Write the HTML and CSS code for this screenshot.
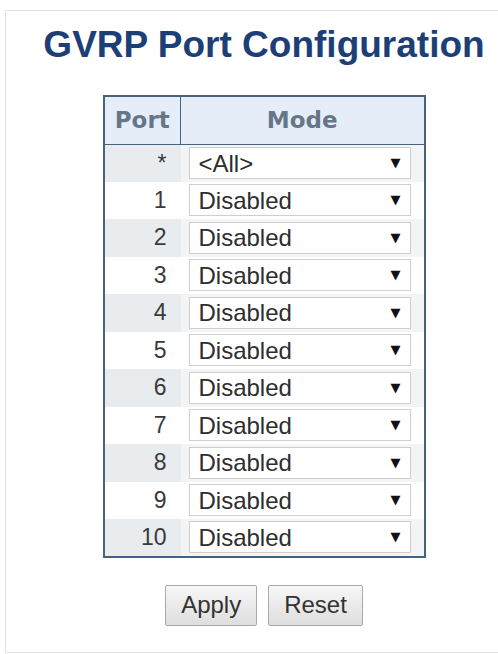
FILE: index.html
```html
<!DOCTYPE html>
<html lang="en">

<head>
    <meta charset="UTF-8">
    <title>GVRP Port Configuration</title>
    <link rel="stylesheet" href="styles.css">
</head>

<body>
    <div class="page">
        <h1>GVRP Port Configuration</h1>
        <table class="config">
            <thead>
                <tr>
                    <th class="col-port">Port</th>
                    <th>Mode</th>
                </tr>
            </thead>
            <tbody>
                <tr class="shade">
                    <td class="port">*</td>
                    <td class="mode"><div class="select"><select><option>&lt;All&gt;</option><option>Disabled</option><option>GVRP enabled</option></select><span class="arrow">&#9660;</span></div></td>
                </tr>
                <tr>
                    <td class="port">1</td>
                    <td class="mode"><div class="select"><select><option>Disabled</option><option>GVRP enabled</option></select><span class="arrow">&#9660;</span></div></td>
                </tr>
                <tr class="shade">
                    <td class="port">2</td>
                    <td class="mode"><div class="select"><select><option>Disabled</option><option>GVRP enabled</option></select><span class="arrow">&#9660;</span></div></td>
                </tr>
                <tr>
                    <td class="port">3</td>
                    <td class="mode"><div class="select"><select><option>Disabled</option><option>GVRP enabled</option></select><span class="arrow">&#9660;</span></div></td>
                </tr>
                <tr class="shade">
                    <td class="port">4</td>
                    <td class="mode"><div class="select"><select><option>Disabled</option><option>GVRP enabled</option></select><span class="arrow">&#9660;</span></div></td>
                </tr>
                <tr>
                    <td class="port">5</td>
                    <td class="mode"><div class="select"><select><option>Disabled</option><option>GVRP enabled</option></select><span class="arrow">&#9660;</span></div></td>
                </tr>
                <tr class="shade">
                    <td class="port">6</td>
                    <td class="mode"><div class="select"><select><option>Disabled</option><option>GVRP enabled</option></select><span class="arrow">&#9660;</span></div></td>
                </tr>
                <tr>
                    <td class="port">7</td>
                    <td class="mode"><div class="select"><select><option>Disabled</option><option>GVRP enabled</option></select><span class="arrow">&#9660;</span></div></td>
                </tr>
                <tr class="shade">
                    <td class="port">8</td>
                    <td class="mode"><div class="select"><select><option>Disabled</option><option>GVRP enabled</option></select><span class="arrow">&#9660;</span></div></td>
                </tr>
                <tr>
                    <td class="port">9</td>
                    <td class="mode"><div class="select"><select><option>Disabled</option><option>GVRP enabled</option></select><span class="arrow">&#9660;</span></div></td>
                </tr>
                <tr class="shade">
                    <td class="port">10</td>
                    <td class="mode"><div class="select"><select><option>Disabled</option><option>GVRP enabled</option></select><span class="arrow">&#9660;</span></div></td>
                </tr>
            </tbody>
        </table>
        <div class="buttons">
            <button>Apply</button>
            <button>Reset</button>
        </div>
    </div>
</body>

</html>
```

FILE: styles.css
```css
/* General Reset */
* {
    margin: 0;
    padding: 0;
    box-sizing: border-box;
}

body {
    font-family: 'Liberation Sans', Arial, sans-serif;
    background: #fff;
    color: #333;
    overflow: hidden;
}

.page {
    margin: 10px 0 0 5px;
    width: 518px;
    height: 643px;
    border: 1px solid #e2e2e2;
    display: flex;
    flex-direction: column;
    align-items: center;
}

h1 {
    margin-top: 14px;
    font-size: 37px;
    font-weight: bold;
    color: #1d3f78;
    line-height: 40px;
}

.config {
    margin-top: 30px;
    width: 323px;
    border-collapse: collapse;
    border: 2px solid #45627f;
}

.config th {
    height: 48px;
    background: #e5eef8;
    color: #66768a;
    font-family: 'DejaVu Sans', Verdana, sans-serif;
    font-size: 23px;
    font-weight: bold;
    border: 1px solid #45627f;
}

.config th.col-port {
    width: 77px;
}

.config td {
    height: 37.5px;
}

.config tr.shade td {
    background: #e9ecef;
}

.config tr.shade td.mode {
    background: #f3f4f5;
}

.config td.port {
    text-align: right;
    padding-right: 14px;
    font-size: 23px;
    color: #3a3a3a;
}

.config td.mode {
    padding: 0 13px 0 8px;
}

.select {
    position: relative;
    height: 32px;
}

.select select {
    appearance: none;
    width: 100%;
    height: 100%;
    border: 1px solid #cfcfcf;
    border-radius: 0;
    background: #fff;
    font-family: 'Liberation Sans', Arial, sans-serif;
    font-size: 24px;
    color: #2e2e2e;
    padding-left: 9px;
}

.select .arrow {
    position: absolute;
    right: 10px;
    top: 7px;
    font-family: 'DejaVu Sans', sans-serif;
    font-size: 13px;
    line-height: 18px;
    color: #111;
    pointer-events: none;
}

.buttons {
    margin-top: 27px;
    display: flex;
    gap: 11px;
}

.buttons button {
    height: 41px;
    padding: 0 15px;
    font-family: 'Liberation Sans', Arial, sans-serif;
    font-size: 24px;
    color: #333;
    background: linear-gradient(#f7f7f7, #dedede);
    border: 1px solid #a9a9a9;
    border-radius: 2px;
}
```
